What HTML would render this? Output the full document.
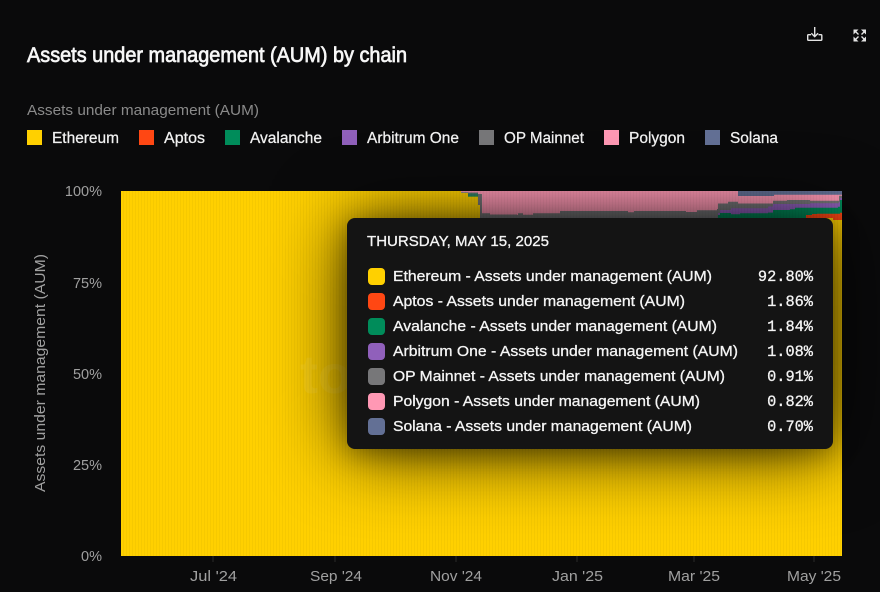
<!DOCTYPE html>
<html><head><meta charset="utf-8"><style>
html,body{margin:0;padding:0;background:#0a0a0b;width:880px;height:592px;overflow:hidden}
svg{display:block;position:absolute;left:0;top:0;font-family:"Liberation Sans",sans-serif}
#tip{position:absolute;left:347px;top:218px;width:486px;height:231px;border-radius:8px;background:#141414;box-shadow:0 2px 75px rgba(0,0,0,.85),0 4px 26px rgba(0,0,0,.3)}
.lg{font-size:15.5px;fill:#f2f2f2;stroke:#f2f2f2;stroke-width:.25px}
.ax{font-size:14.5px;fill:#a0a0a0}
.tt{font-size:15px;fill:#f5f5f5;stroke:#f5f5f5;stroke-width:.3px}
.v{font-family:"Liberation Mono",monospace;font-size:15.3px;fill:#f5f5f5;stroke:#f5f5f5;stroke-width:.3px;text-anchor:end}
</style></head><body>
<svg width="880" height="592" viewBox="0 0 880 592" xmlns="http://www.w3.org/2000/svg">
<defs>
<pattern id="st" width="3" height="10" patternUnits="userSpaceOnUse"><rect width="1" height="10" fill="#000" opacity=".035"/></pattern>
</defs>
<rect width="880" height="592" fill="#0a0a0b"/>
<text x="27" y="62" font-size="21" fill="#f7f7f7" stroke="#f7f7f7" stroke-width=".7" textLength="380" lengthAdjust="spacingAndGlyphs">Assets under management (AUM) by chain</text>
<text x="27" y="115" font-size="15" fill="#8a8a8a" textLength="232" lengthAdjust="spacingAndGlyphs">Assets under management (AUM)</text>

<!-- icons -->
<g fill="none" stroke="#e4e4e4" stroke-width="1.4">
<path d="M811 34.700H808.500Q807.700 34.700 807.700 35.500V39.500Q807.700 40.300 808.500 40.300H821Q821.800 40.300 821.800 39.500V35.500Q821.800 34.700 821 34.700H818.500"/>
<path d="M814.700 27V36.500M811.300 33.200l3.400 3.400 3.400-3.400"/>
<path d="M855 31l3.500 3.500M865 31l-3.500 3.500M855 40l3.500-3.500M865 40l-3.500-3.500"/>
</g>
<g fill="#e4e4e4">
<path d="M853.500 29.500H858.500L853.500 34.500ZM866 29.500H861L866 34.500ZM853.500 41.500H858.500L853.500 36.500ZM866 41.500H861L866 36.500Z"/>
</g>

<!-- legend -->
<rect x="27" y="130" width="15" height="15" fill="#ffd000"/><text class="lg" x="52" y="143" textLength="67" lengthAdjust="spacingAndGlyphs">Ethereum</text>
<rect x="139" y="130" width="15" height="15" fill="#ff4713"/><text class="lg" x="164" y="143" textLength="41" lengthAdjust="spacingAndGlyphs">Aptos</text>
<rect x="225" y="130" width="15" height="15" fill="#008c5a"/><text class="lg" x="250" y="143" textLength="72" lengthAdjust="spacingAndGlyphs">Avalanche</text>
<rect x="342" y="130" width="15" height="15" fill="#9060bb"/><text class="lg" x="367" y="143" textLength="92" lengthAdjust="spacingAndGlyphs">Arbitrum One</text>
<rect x="479" y="130" width="15" height="15" fill="#777779"/><text class="lg" x="504" y="143" textLength="80" lengthAdjust="spacingAndGlyphs">OP Mainnet</text>
<rect x="604" y="130" width="15" height="15" fill="#ff98b4"/><text class="lg" x="629" y="143" textLength="56" lengthAdjust="spacingAndGlyphs">Polygon</text>
<rect x="705" y="130" width="15" height="15" fill="#637095"/><text class="lg" x="730" y="143" textLength="48" lengthAdjust="spacingAndGlyphs">Solana</text>

<!-- axes -->
<g class="ax" text-anchor="end">
<text x="102" y="196">100%</text><text x="102" y="288">75%</text><text x="102" y="379">50%</text><text x="102" y="470">25%</text><text x="102" y="561">0%</text>
</g>
<text class="ax" transform="translate(45,373) rotate(-90)" text-anchor="middle" textLength="238" lengthAdjust="spacingAndGlyphs">Assets under management (AUM)</text>
<g stroke="#2a2a2a" stroke-width="1"><path d="M213 556v6M335 556v6M456 556v6M577 556v6M694 556v6M814 556v6"/></g>
<g class="ax">
<text x="190" y="581" textLength="47" lengthAdjust="spacingAndGlyphs">Jul '24</text>
<text x="310" y="581" textLength="52" lengthAdjust="spacingAndGlyphs">Sep '24</text>
<text x="430" y="581" textLength="52" lengthAdjust="spacingAndGlyphs">Nov '24</text>
<text x="552" y="581" textLength="51" lengthAdjust="spacingAndGlyphs">Jan '25</text>
<text x="668" y="581" textLength="52" lengthAdjust="spacingAndGlyphs">Mar '25</text>
<text x="787" y="581" textLength="54" lengthAdjust="spacingAndGlyphs">May '25</text>
</g>

<!-- chart -->
<rect x="121" y="191" width="721" height="365" fill="#ffd000"/>
<path d="M738 191H842V225H738Z" fill="#637095"/>
<path d="M461 191H738V196H774V194.700H842V225H461Z" fill="#ff98b4"/>
<path d="M461 192.500H478V194H482V213.300H490V214.500H517V215H518V213.300H523V214.800H533V213.300H560V211H628V212.300H634V211H686V212H697V210.300H717V209H718V203.500H728V201.700H738V203.500H773V200.700H787V200H810V200.700H839V195.700H842V225H461Z" fill="#777779"/>
<path d="M718 218V213H720V210H731V208.300H768V206.500H773V204H810V203.300H839V202H840V198H842V225H718Z" fill="#9060bb"/>
<path d="M718 218V215H720V213H731V214.300H740V213.300H768V212.600H773V210H790V209.300H795V207.700H838V206.700H840V200H842V225H718Z" fill="#008c5a"/>
<path d="M790 218H806V215H812V214H817V213.700H840V212.700H842V225H790Z" fill="#ff4713"/>
<path d="M121 191H461V193H468V196H478V205H480V218H833V220H842V556H121Z" fill="#ffd000"/>
<path d="M461 192.500H468V193.500H478V197H468V193H461Z" fill="#008c5a" opacity=".6"/>
<rect x="121" y="191" width="721" height="365" fill="url(#st)"/>
<text x="300" y="393" font-size="54" font-weight="700" fill="#fff" opacity=".07">tokenterminal</text>
</svg>

<div id="tip"></div>

<svg width="880" height="592" viewBox="0 0 880 592" xmlns="http://www.w3.org/2000/svg">
<text x="367" y="246" font-size="15" fill="#f5f5f5" stroke="#f5f5f5" stroke-width=".3" textLength="182" lengthAdjust="spacingAndGlyphs">THURSDAY, MAY 15, 2025</text>

<rect x="368" y="268" width="17" height="17" rx="4" fill="#ffd000"/><text class="tt" x="393" y="281" textLength="319" lengthAdjust="spacingAndGlyphs">Ethereum - Assets under management (AUM)</text><text class="v" x="813" y="281">92.80%</text>
<rect x="368" y="293" width="17" height="17" rx="4" fill="#ff4713"/><text class="tt" x="393" y="306" textLength="292" lengthAdjust="spacingAndGlyphs">Aptos - Assets under management (AUM)</text><text class="v" x="813" y="306">1.86%</text>
<rect x="368" y="318" width="17" height="17" rx="4" fill="#008c5a"/><text class="tt" x="393" y="331" textLength="324" lengthAdjust="spacingAndGlyphs">Avalanche - Assets under management (AUM)</text><text class="v" x="813" y="331">1.84%</text>
<rect x="368" y="343" width="17" height="17" rx="4" fill="#9060bb"/><text class="tt" x="393" y="356" textLength="345" lengthAdjust="spacingAndGlyphs">Arbitrum One - Assets under management (AUM)</text><text class="v" x="813" y="356">1.08%</text>
<rect x="368" y="368" width="17" height="17" rx="4" fill="#777779"/><text class="tt" x="393" y="381" textLength="332" lengthAdjust="spacingAndGlyphs">OP Mainnet - Assets under management (AUM)</text><text class="v" x="813" y="381">0.91%</text>
<rect x="368" y="393" width="17" height="17" rx="4" fill="#ff98b4"/><text class="tt" x="393" y="406" textLength="307" lengthAdjust="spacingAndGlyphs">Polygon - Assets under management (AUM)</text><text class="v" x="813" y="406">0.82%</text>
<rect x="368" y="418" width="17" height="17" rx="4" fill="#637095"/><text class="tt" x="393" y="431" textLength="299" lengthAdjust="spacingAndGlyphs">Solana - Assets under management (AUM)</text><text class="v" x="813" y="431">0.70%</text>
</svg>
</body></html>
